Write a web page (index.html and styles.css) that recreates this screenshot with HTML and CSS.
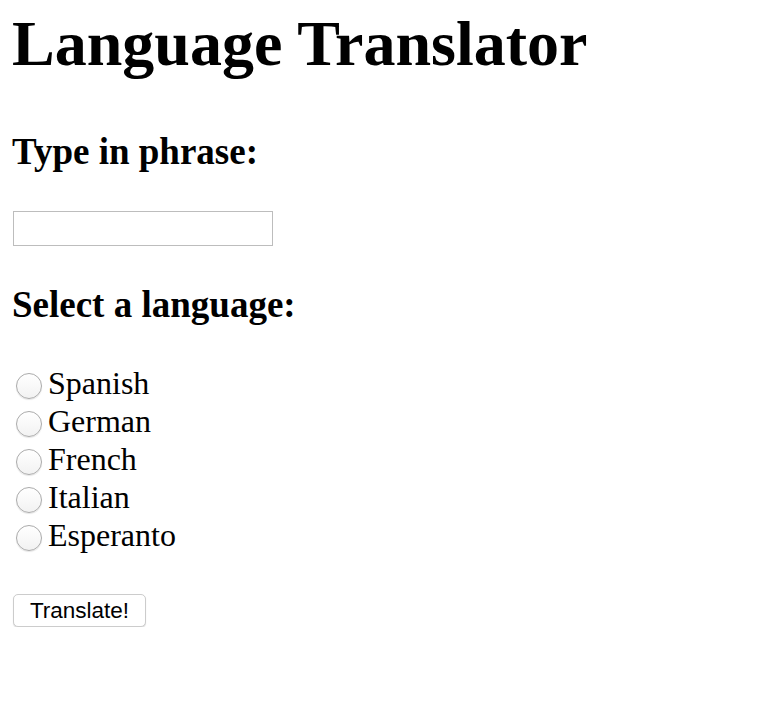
FILE: index.html
```html
<!DOCTYPE html>
<html lang="en">
<head>
<meta charset="utf-8">
<title>Language Translator</title>
<link rel="stylesheet" href="styles.css">
</head>
<body>
<main class="page">
  <h1 class="title">Language Translator</h1>
  <form class="translator">
    <h2 class="section-title section-title--phrase">Type in phrase:</h2>
    <input class="phrase-input" type="text" name="phrase">
    <h2 class="section-title section-title--language">Select a language:</h2>
    <div class="options">
      <label class="option"><input class="radio" type="radio" name="lang" value="es"><span class="option-text">Spanish</span></label>
      <label class="option"><input class="radio" type="radio" name="lang" value="de"><span class="option-text">German</span></label>
      <label class="option"><input class="radio" type="radio" name="lang" value="fr"><span class="option-text">French</span></label>
      <label class="option"><input class="radio" type="radio" name="lang" value="it"><span class="option-text">Italian</span></label>
      <label class="option"><input class="radio" type="radio" name="lang" value="eo"><span class="option-text">Esperanto</span></label>
    </div>
    <button class="translate-btn" type="button">Translate!</button>
  </form>
</main>
</body>
</html>
```

FILE: styles.css
```css
html, body {
  margin: 0;
  padding: 0;
  background: #ffffff;
}

body {
  font-family: "Liberation Serif", "Times New Roman", serif;
  color: #000000;
}

.page {
  padding: 0 12px;
}

.title {
  margin: 7px 0 0;
  font-size: 64px;
  line-height: 74px;
  font-weight: bold;
}

.translator {
  display: block;
  margin: 0;
}

.section-title {
  margin: 0;
  font-size: 37px;
  line-height: 43px;
  font-weight: bold;
}

.section-title--phrase {
  margin-top: 49px;
}

.section-title--language {
  margin-top: 37px;
}

.phrase-input {
  display: block;
  box-sizing: border-box;
  margin: 38px 0 0 1px;
  width: 260px;
  height: 35px;
  padding: 2px 4px;
  border: 1px solid #bdbdbd;
  border-radius: 0;
  background: #ffffff;
  font-family: "Liberation Sans", Arial, sans-serif;
  font-size: 20px;
  outline: none;
}

.options {
  display: flex;
  flex-direction: column;
  margin-top: 38px;
}

.option {
  display: flex;
  align-items: flex-start;
  height: 38px;
  font-size: 32px;
  line-height: 38px;
}

.radio {
  appearance: none;
  -webkit-appearance: none;
  box-sizing: border-box;
  flex: none;
  width: 26px;
  height: 26px;
  margin: 9px 6px 0 4px;
  border: 1px solid #ababab;
  border-radius: 50%;
  background: linear-gradient(#ffffff, #f2f2f2);
  box-shadow: 0 1px 1px rgba(0, 0, 0, 0.1);
}

.option-text {
  white-space: nowrap;
}

.translate-btn {
  display: block;
  box-sizing: border-box;
  margin: 40px 0 0 1px;
  width: 133px;
  height: 33px;
  padding: 0;
  border: 1px solid #cccccc;
  border-radius: 5px;
  background: #ffffff;
  box-shadow: 0 1px 1px rgba(0, 0, 0, 0.14);
  font-family: "Liberation Sans", Arial, Helvetica, sans-serif;
  font-size: 22.5px;
  line-height: 32px;
  color: #000000;
  text-align: center;
}
```
